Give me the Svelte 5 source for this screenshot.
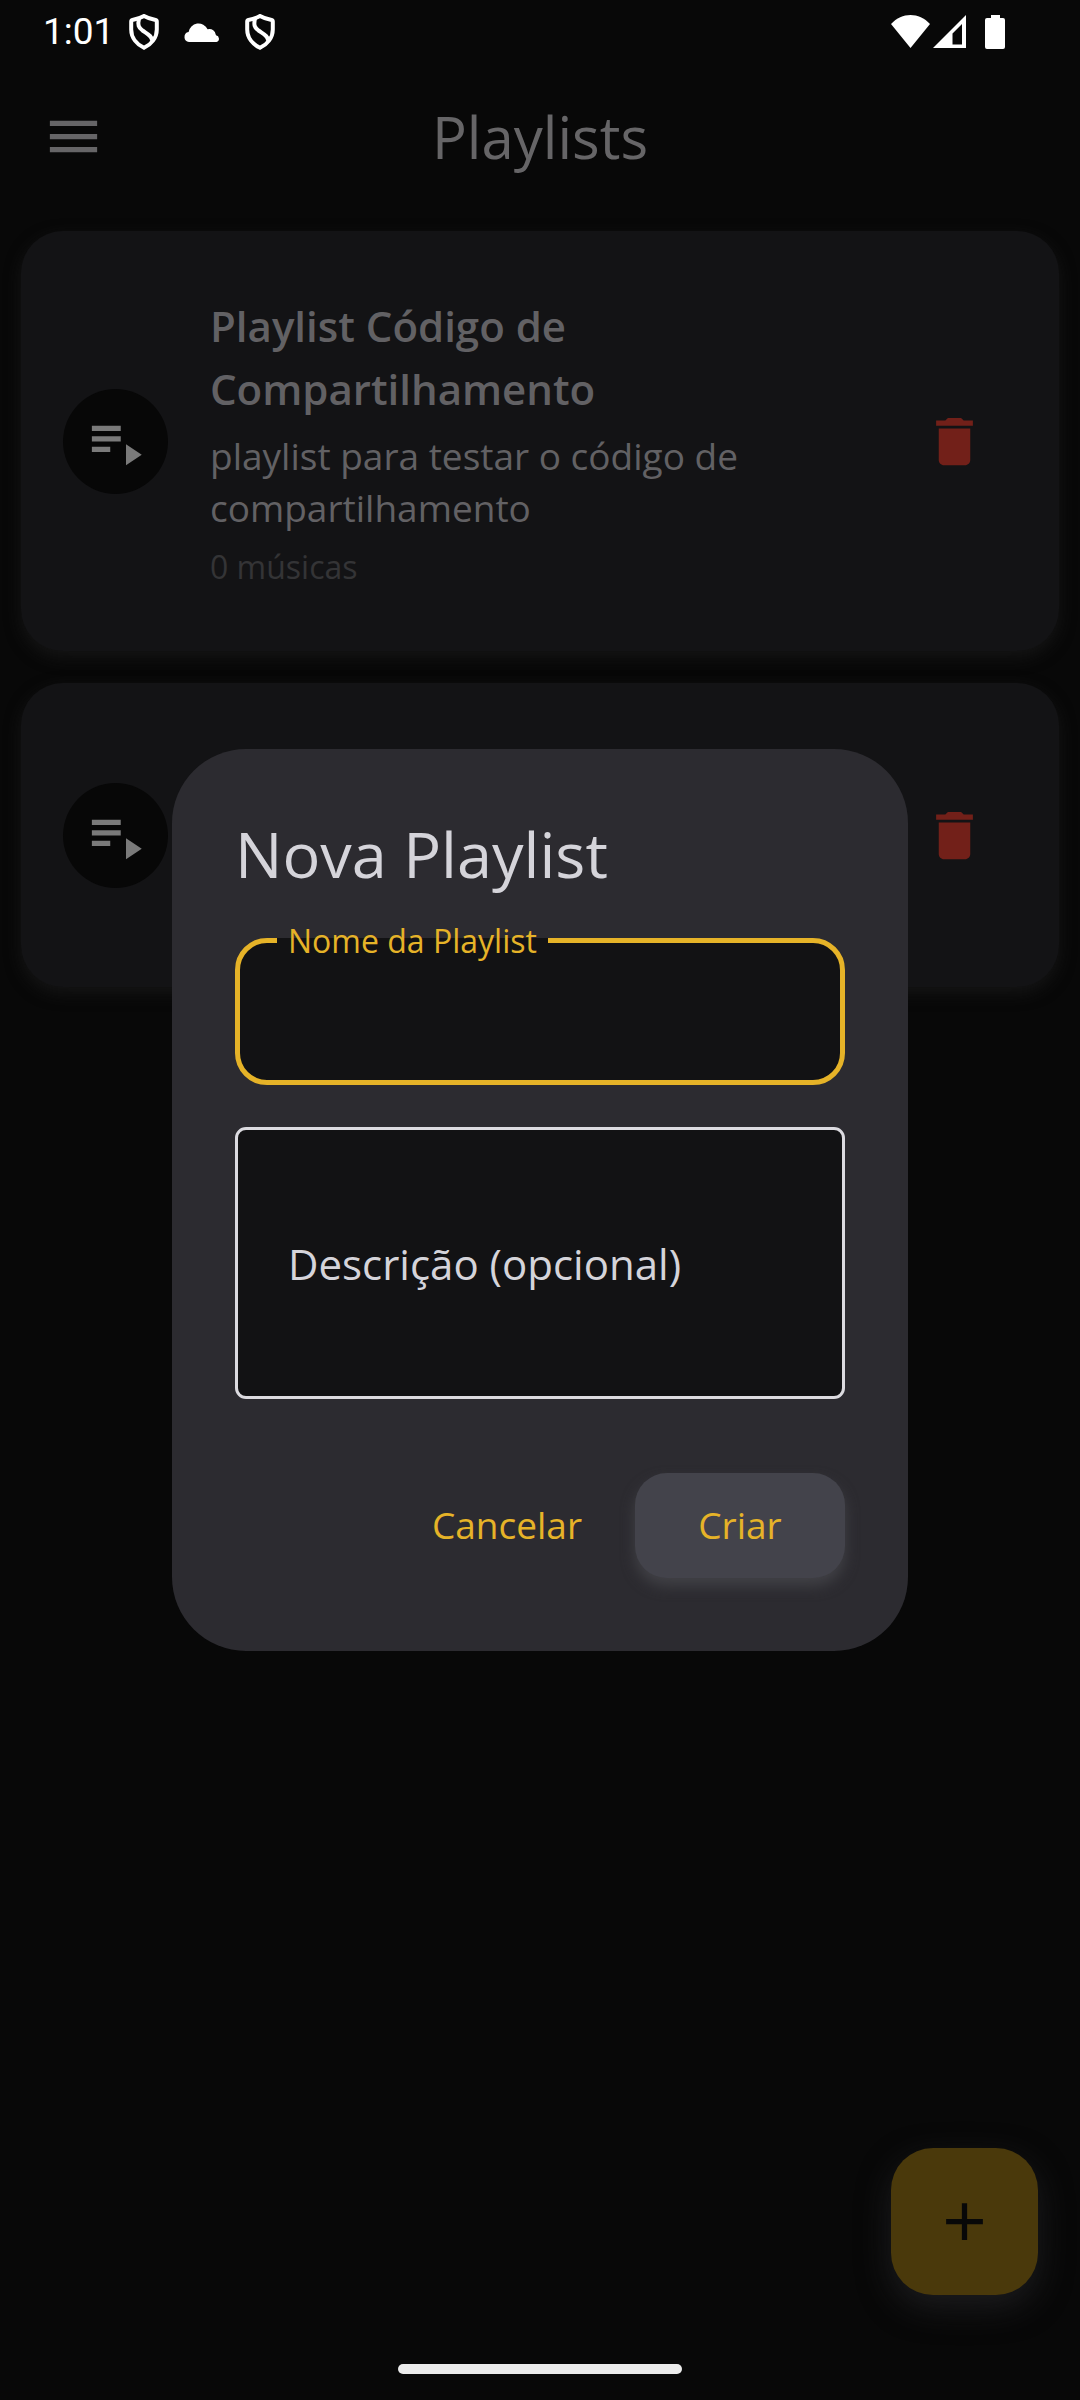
<script>
  let name = $state('');
  let description = $state('');

  const playlists = [
    {
      id: 1,
      title: 'Playlist Código de Compartilhamento',
      description: 'playlist para testar o código de compartilhamento',
      count: '0 músicas'
    },
    { id: 2 }
  ];
</script>

{#snippet shield()}
  <svg class="shield" viewBox="0 0 30 36" aria-hidden="true">
    <path d="M15 2 Q19.500 4.600 26.600 6 Q27.800 6.300 27.800 7.500 V15.500 C27.800 24 22 30.500 15 33.800 C8 30.500 2.200 24 2.200 15.500 V7.500 Q2.200 6.300 3.400 6 Q10.500 4.600 15 2 Z" />
    <path d="M10 4.500 C8.500 11 9.500 13.500 13.500 16.500 C18.500 20 23.500 22 23 27" />
  </svg>
{/snippet}

<div class="screen">
  <div class="status">
    <div class="group">
      <span class="time">1:01</span>
      {@render shield()}
      <svg class="cloud" viewBox="0 0 36 20" aria-hidden="true">
        <path d="M5 20a5 5 0 0 1-.4-9.900A10 10 0 0 1 23.600 7.300 6.500 6.500 0 0 1 32 13.200 3.500 3.500 0 0 1 32.500 20z" />
      </svg>
      {@render shield()}
    </div>
    <div class="group right">
      <svg class="wifi" viewBox="0 0 39 33" aria-hidden="true">
        <path d="M0 9C11-3 28-3 39 9L19.500 33z" />
      </svg>
      <svg class="signal" viewBox="0 0 33 33" aria-hidden="true">
        <path fill-rule="evenodd" d="M0 33L33 0V33zM19.500 18.500V29.500H29V9z" />
      </svg>
      <svg class="battery" viewBox="0 0 20 34" aria-hidden="true">
        <path d="M6 0h9v3h3q2 0 2 2v27q0 2-2 2H2q-2 0-2-2V5q0-2 2-2h4z" />
      </svg>
    </div>
  </div>

  <header>
    <button class="icon-button" aria-label="Menu">
      <svg class="icon" viewBox="0 0 24 24"><path d="M3 18h18v-2H3v2zm0-5h18v-2H3v2zm0-7v2h18V6H3z" /></svg>
    </button>
    <h1>Playlists</h1>
  </header>

  <main>
    {#each playlists as playlist (playlist.id)}
      <article class="card">
        <div class="disc">
          <svg class="icon" viewBox="0 0 24 24" aria-hidden="true">
            <path d="M3 10h11v2H3zM3 6h11v2H3zM3 14h7v2H3zM16 13v8l6-4z" />
          </svg>
        </div>
        <div class="info">
          {#if playlist.title}
            <h2>{playlist.title}</h2>
            <p class="description">{playlist.description}</p>
            <p class="count">{playlist.count}</p>
          {/if}
        </div>
        <button class="icon-button delete" aria-label="Excluir playlist">
          <svg class="icon" viewBox="0 0 24 24">
            <path d="M6 19c0 1.100.9 2 2 2h8c1.100 0 2-.9 2-2V7H6v12zM19 4h-3.500l-1-1h-5l-1 1H5v2h14V4z" />
          </svg>
        </button>
      </article>
    {/each}
  </main>

  <button class="fab" aria-label="Adicionar playlist">
    <svg class="icon" viewBox="0 0 24 24"><path d="M19 13h-6v6h-2v-6H5v-2h6V5h2v6h6v2z" /></svg>
  </button>

  <div class="overlay">
    <form class="dialog" role="dialog" aria-labelledby="dialog-title" onsubmit={(e) => e.preventDefault()}>
      <h2 id="dialog-title">Nova Playlist</h2>
      <div class="field focused">
        <label for="name">Nome da Playlist</label>
        <input id="name" type="text" bind:value={name} />
      </div>
      <div class="field multiline">
        <textarea id="description" bind:value={description}></textarea>
        {#if !description}<label for="description">Descrição (opcional)</label>{/if}
      </div>
      <div class="actions">
        <button type="button" class="text-button">Cancelar</button>
        <button type="submit" class="filled-button">Criar</button>
      </div>
    </form>
  </div>

  <div class="home"></div>
</div>

<style>
  :global(body) {
    background: #080808;
  }

  .screen {
    min-height: 100vh;
    background: #080808;
    font-family: 'Open Sans', 'Noto Sans', sans-serif;
  }

  .screen * {
    box-sizing: border-box;
  }

  h1,
  h2,
  p {
    margin: 0;
    font-weight: 400;
  }

  button {
    padding: 0;
    border: 0;
    background: none;
    font: inherit;
    color: inherit;
    cursor: pointer;
  }

  svg {
    display: block;
    fill: currentColor;
    flex: none;
  }

  .icon {
    width: 63px;
    height: 63px;
  }

  .status {
    display: flex;
    justify-content: space-between;
    height: 63px;
    padding: 0 75px 0 43px;
    color: #fff;
  }

  .group {
    display: flex;
    align-items: center;
    height: 63px;
  }

  .time {
    margin-right: 15px;
    font: 37px/63px Roboto, sans-serif;
  }

  .shield {
    width: 30px;
    height: 36px;
    fill: none;
    stroke: currentColor;
    stroke-width: 4;
  }

  .cloud {
    width: 36px;
    height: 20px;
    margin: 0 25px;
  }

  .wifi {
    width: 39px;
    height: 33px;
  }

  .signal {
    width: 33px;
    height: 33px;
    margin: 0 19px 0 3px;
  }

  .battery {
    width: 20px;
    height: 34px;
  }

  header {
    display: grid;
    grid-template-columns: 1fr auto 1fr;
    align-items: center;
    height: 147px;
    padding: 0 10px;
    color: #666567;
  }

  h1 {
    font-size: 58px;
    line-height: 74px;
  }

  .icon-button {
    display: flex;
    align-items: center;
    justify-content: center;
    flex: none;
    width: 126px;
    height: 126px;
  }

  main {
    display: flex;
    flex-direction: column;
    gap: 32px;
    padding: 21px;
  }

  .card {
    display: flex;
    align-items: center;
    gap: 42px;
    min-height: 304px;
    padding: 63px 42px;
    border-radius: 42px;
    background: #131315;
    box-shadow: 0 6px 16px #151515;
  }

  .disc {
    display: flex;
    align-items: center;
    justify-content: center;
    flex: none;
    width: 105px;
    height: 105px;
    border-radius: 50%;
    background: #070707;
    color: #7a7a7a;
  }

  .info {
    display: flex;
    flex-direction: column;
    flex: 1;
    color: #626164;
  }

  .info h2 {
    font-size: 42px;
    font-weight: 600;
    line-height: 63px;
  }

  .description {
    margin: 10px 0 12px;
    font-size: 37px;
    line-height: 52px;
  }

  .count {
    color: #343436;
    font-size: 32px;
    line-height: 42px;
  }

  .delete {
    color: #722019;
  }

  .fab {
    position: fixed;
    right: 42px;
    bottom: 105px;
    display: flex;
    align-items: center;
    justify-content: center;
    width: 147px;
    height: 147px;
    border-radius: 42px;
    background: #4a390b;
    color: #080808;
    box-shadow: 0 12px 32px #1c1c1e;
  }

  .overlay {
    position: fixed;
    inset: 0;
    display: flex;
    align-items: center;
    justify-content: center;
  }

  .dialog {
    display: flex;
    flex-direction: column;
    width: 100%;
    max-width: 736px;
    padding: 63px;
    border-radius: 74px;
    background: #2c2b30;
    color: #d5d4da;
  }

  .dialog h2 {
    margin-bottom: 42px;
    font-size: 63px;
    line-height: 84px;
  }

  .field {
    position: relative;
    display: grid;
    align-items: center;
    color: #d5d4da;
  }

  .field input,
  .field textarea {
    grid-area: 1 / 1;
    display: block;
    width: 100%;
    margin: 0;
    padding: 42px 53px;
    background: #121214;
    color: #d5d4da;
    font: inherit;
    font-size: 42px;
    line-height: 63px;
    outline: none;
    resize: none;
  }

  .field input {
    height: 147px;
    border: 5px solid #e6b328;
    border-radius: 32px;
  }

  .focused label {
    position: absolute;
    top: -18px;
    left: 42px;
    padding: 0 11px;
    background: linear-gradient(#2c2b30 18px, #121214 18px);
    color: #e6b328;
    font-size: 32px;
    line-height: 42px;
  }

  .multiline {
    margin-top: 42px;
  }

  .field textarea {
    height: 272px;
    border: 3px solid #dcdbe0;
    border-radius: 11px;
  }

  .multiline label {
    grid-area: 1 / 1;
    z-index: 1;
    padding: 0 53px;
    font-size: 42px;
    line-height: 63px;
    pointer-events: none;
  }

  .actions {
    display: flex;
    align-items: center;
    justify-content: flex-end;
    gap: 21px;
    height: 126px;
    margin-top: 63px;
    color: #e6b328;
    font-size: 37px;
    line-height: 52px;
  }

  .text-button,
  .filled-button {
    height: 105px;
    padding: 0 32px;
    border-radius: 32px;
  }

  .filled-button {
    min-width: 210px;
    background: #43434b;
    box-shadow: 0 8px 14px #414146;
  }

  .home {
    position: fixed;
    right: 0;
    bottom: 26px;
    left: 0;
    width: 284px;
    height: 10px;
    margin: 0 auto;
    border-radius: 5px;
    background: #ebebeb;
  }
</style>
